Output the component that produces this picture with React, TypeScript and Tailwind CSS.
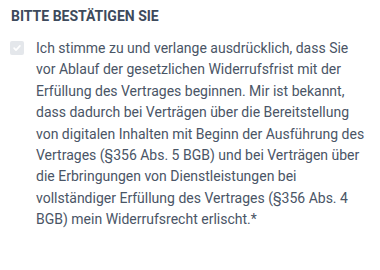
export default function App() {
  return (
    <div className="w-[380px] h-[270px] bg-white px-[11px] pt-[8px] font-['Roboto',sans-serif]">
      <h3 className="text-[14px] font-bold leading-[16px] text-[#3d4a5c] uppercase">Bitte bestätigen Sie</h3>
      <label className="mt-[14px] flex gap-[12px]">
        <span className="-ml-px mt-[3px] flex h-[14px] w-[14px] shrink-0 items-center justify-center rounded-[2px] bg-[#e4e7eb]">
          <svg viewBox="0 0 12 12" className="h-[10px] w-[10px]" fill="none" stroke="#ffffff" strokeWidth="2" strokeLinecap="round" strokeLinejoin="round">
            <path d="M2.5 6.2l2.3 2.3 4.7-5" />
          </svg>
        </span>
        <span className="text-[14px] leading-[21.4px] text-[#4a5566]">
          Ich stimme zu und verlange ausdrücklich, dass Sie vor Ablauf der gesetzlichen Widerrufsfrist mit der Erfüllung des Vertrages beginnen. Mir ist bekannt, dass dadurch bei Verträgen über die Bereitstellung von digitalen Inhalten mit Beginn der Ausführung des Vertrages (§356 Abs. 5 BGB) und bei Verträgen über die Erbringungen von Dienstleistungen bei vollständiger Erfüllung des Vertrages (§356 Abs. 4 BGB) mein Widerrufsrecht erlischt.*
        </span>
      </label>
    </div>
  );
}
